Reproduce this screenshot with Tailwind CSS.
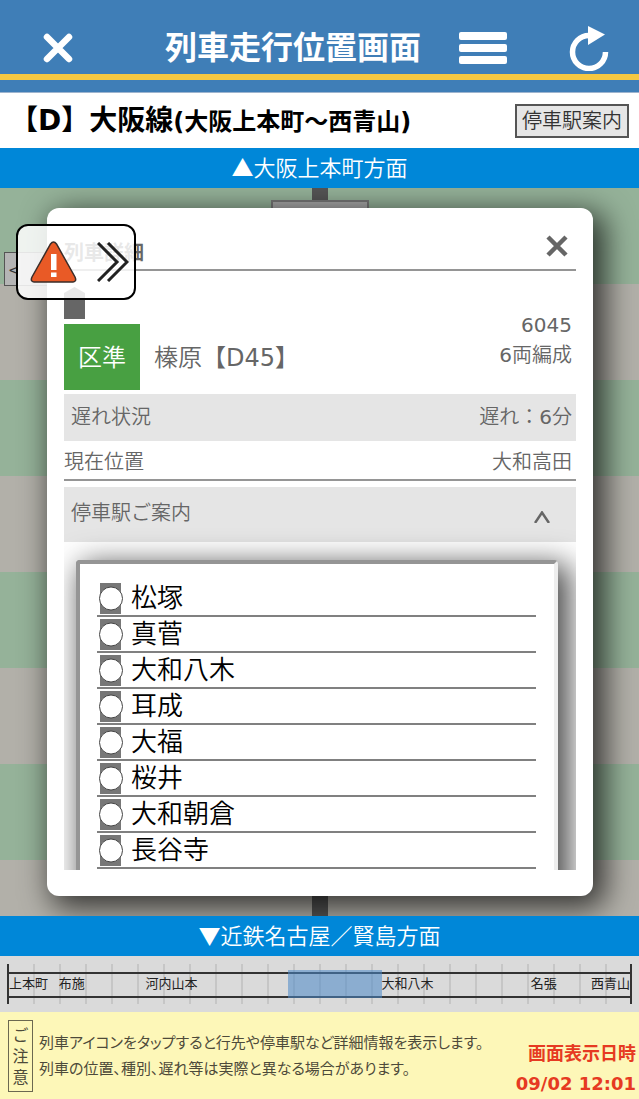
<!DOCTYPE html>
<html lang="ja">
<head>
    <meta charset="UTF-8">
    <meta name="viewport" content="width=device-width, initial-scale=1">
    <title>列車走行位置画面</title>
    <script src="https://cdn.jsdelivr.net/npm/@tailwindcss/browser@4"></script>
</head>
<body class="min-h-screen flex flex-col bg-white text-[#666] font-['DejaVu_Sans','Noto_Sans_CJK_JP',sans-serif]">
    <!-- Header -->
    <header class="bg-[#3f7eb7] text-white pb-3 border-b border-[#9db4cf]">
        <div class="h-20 flex items-center border-b-6 border-[#f5c842] pt-[22px] pl-[43px] pr-[30px]">
            <button aria-label="閉じる">
                <svg class="size-[30px]" viewBox="0 0 30 30" fill="none" stroke="currentColor" stroke-width="6.500" stroke-linecap="round"><path d="M4 4L26 26M26 4L4 26"/></svg>
            </button>
            <h1 class="grow text-right text-[32px] leading-10 font-bold mr-[38px]">列車走行位置画面</h1>
            <button class="mr-[62px]" aria-label="メニュー">
                <svg class="w-12 h-8" viewBox="0 0 48 32" fill="currentColor"><rect width="48" height="8" rx="2"/><rect y="12" width="48" height="8" rx="2"/><rect y="24" width="48" height="8" rx="2"/></svg>
            </button>
            <button aria-label="更新">
                <svg class="w-10 h-[46px]" viewBox="0 0 40 46"><path d="M20 10.500A16.500 16.500 0 1 0 36.500 27" fill="none" stroke="currentColor" stroke-width="5.500"/><path d="M19 1L36 9.500L19 20Z" fill="currentColor"/></svg>
            </button>
        </div>
    </header>
    <div class="h-[55px] flex items-center justify-between pl-[10px] pr-[10px] text-black">
        <h2 class="text-[28px] leading-9 font-bold">【D】大阪線<span class="text-2xl">(大阪上本町〜西青山)</span></h2>
        <button class="h-[34px] border-2 border-[#555] bg-[#e6e6e6] px-[5px] text-xl leading-7 font-[350] text-[#333]">停車駅案内</button>
    </div>
    <div class="h-10 bg-[#0087d8] text-white text-center text-[22px] leading-9 font-[350] font-['Noto_Sans_CJK_JP',sans-serif]">▲大阪上本町方面</div>

    <!-- Line map, with the train detail dialog over it -->
    <main class="relative grow flex py-5 pl-[47px] pr-[46px] overflow-hidden bg-[repeating-linear-gradient(to_bottom,#95b299_0_96px,#b2b0a9_96px_192px)]">
        <div class="absolute inset-y-0 left-1/2 -translate-x-1/2 w-4 bg-[#555]"></div>
        <div class="absolute top-3 left-1/2 -translate-x-1/2 w-[98px] h-12 border-2 border-[#777] bg-[#aaa]"></div>
        <button class="absolute top-16 left-1 w-14 h-[34px] border border-[#555] bg-[#b5b5b5] text-left pl-1 text-[#333] font-['Noto_Sans_CJK_JP',sans-serif]">&lt;</button>

        <section role="dialog" aria-labelledby="detail" class="relative grow flex flex-col rounded-xl bg-white px-[17px] pb-[26px] shadow-[8px_8px_30px_4px_rgba(0,0,0,0.700)]">
            <div class="h-[63px] flex items-end justify-between border-b-2 border-[#959595] pb-1 pr-2">
                <h3 id="detail" class="text-xl leading-6 font-bold">列車詳細</h3>
                <button class="pb-2" aria-label="詳細を閉じる">
                    <svg class="size-[22px]" viewBox="0 0 22 22" fill="none" stroke="#666" stroke-width="4.500"><path d="M2 2L20 20M20 2L2 20"/></svg>
                </button>
            </div>
            <div class="h-[599px] overflow-hidden">
                <svg class="w-[21px] h-8 mt-4" viewBox="0 0 21 32" fill="#666"><path d="M0 6L10.500 0L21 6V32H0Z"/></svg>
                <div class="flex mt-[5px] mb-1">
                    <span class="w-[76px] h-[66px] bg-[#48a042] text-white text-2xl leading-[64px] text-center font-[350] font-['Noto_Sans_CJK_JP',sans-serif]">区準</span>
                    <p class="ml-[14px] text-2xl leading-[68px] h-[66px]"><span class="font-[350]">榛原</span>【D45】</p>
                    <p class="ml-auto mr-1 -mt-[14px] h-[66px] text-xl leading-[30px] text-right">6045<br>6<span class="font-[350]">両編成</span></p>
                </div>
                <dl class="text-xl">
                    <div class="h-[47px] flex justify-between items-center bg-[#e5e5e5] pl-[7px] pr-1 pb-[2px]"><dt class="font-[350]">遅れ状況</dt><dd><span class="font-[350]">遅れ：</span>6<span class="font-[350]">分</span></dd></div>
                    <div class="h-10 flex justify-between items-center border-b-2 border-[#959595] pt-[3px] pr-1 font-[350]"><dt>現在位置</dt><dd>大和高田</dd></div>
                </dl>
                <button class="mt-[6px] h-[55px] w-full flex justify-between items-center bg-[#e5e5e5] pl-[7px] pr-[26px] pb-1 text-xl font-[350]">
                    停車駅ご案内
                    <svg class="w-4 h-3 mt-2" viewBox="0 0 16 12" fill="none" stroke="#666" stroke-width="2.500"><path d="M1 12L8 1.500L15 12"/></svg>
                </button>
                <ul class="mt-[18px] ml-3 mr-[18px] h-[400px] rounded border-4 border-t-[#959595] border-l-[#959595] border-r-[#eee] border-b-[#eee] bg-white pt-[17px] pl-[17px] pr-[18px] text-[26px] leading-9 font-[350] text-black shadow-[8px_8px_30px_4px_rgba(0,0,0,0.700)]">
                    <li class="h-9 flex items-center gap-2 border-b-2 border-[#808080]"><svg class="w-[26px] h-8" viewBox="0 0 26 32"><path id="stop" d="M3 1H24V32H3Z" fill="#777"/><circle id="dot" cx="14" cy="16.500" r="11.500" fill="#fff" stroke="#444"/></svg>松塚</li>
                    <li class="h-9 flex items-center gap-2 border-b-2 border-[#808080]"><svg class="w-[26px] h-8" viewBox="0 0 26 32"><use href="#stop"/><use href="#dot"/></svg>真菅</li>
                    <li class="h-9 flex items-center gap-2 border-b-2 border-[#808080]"><svg class="w-[26px] h-8" viewBox="0 0 26 32"><use href="#stop"/><use href="#dot"/></svg>大和八木</li>
                    <li class="h-9 flex items-center gap-2 border-b-2 border-[#808080]"><svg class="w-[26px] h-8" viewBox="0 0 26 32"><use href="#stop"/><use href="#dot"/></svg>耳成</li>
                    <li class="h-9 flex items-center gap-2 border-b-2 border-[#808080]"><svg class="w-[26px] h-8" viewBox="0 0 26 32"><use href="#stop"/><use href="#dot"/></svg>大福</li>
                    <li class="h-9 flex items-center gap-2 border-b-2 border-[#808080]"><svg class="w-[26px] h-8" viewBox="0 0 26 32"><use href="#stop"/><use href="#dot"/></svg>桜井</li>
                    <li class="h-9 flex items-center gap-2 border-b-2 border-[#808080]"><svg class="w-[26px] h-8" viewBox="0 0 26 32"><use href="#stop"/><use href="#dot"/></svg>大和朝倉</li>
                    <li class="h-9 flex items-center gap-2 border-b-2 border-[#808080]"><svg class="w-[26px] h-8" viewBox="0 0 26 32"><use href="#stop"/><use href="#dot"/></svg>長谷寺</li>
                </ul>
            </div>
        </section>

        <!-- Floating alert tab -->
        <button class="absolute top-9 left-4 w-[120px] h-[76px] flex items-center justify-between rounded-xl border-2 border-black bg-white/85 pl-3 pr-[5px]" aria-label="運行情報">
            <svg class="w-[47px] h-[42px]" viewBox="0 0 47 42"><path d="M20.500 3Q23.500-1 26.500 3L45 36Q47 40.500 43 41H4Q0 40.500 2 36Z" fill="#e95a26" stroke="#3a2c28" stroke-width="1.500"/><path d="M21 13H26.500V29H21ZM21 31.500H26.500V36H21Z" fill="#fff"/></svg>
            <svg class="w-8 h-10" viewBox="0 0 32 40" fill="none" stroke="#222" stroke-width="3"><path d="M1 1L20 20L1 39M11 1L30 20L11 39"/></svg>
        </button>
    </main>

    <div class="h-10 bg-[#0087d8] text-white text-center text-[22px] leading-9 font-[350] font-['Noto_Sans_CJK_JP',sans-serif]">▼近鉄名古屋／賢島方面</div>

    <!-- Line overview -->
    <nav class="h-14 bg-[#dadada] px-[7px] py-2">
        <div class="relative h-10 border-x-2 border-[#333] bg-[repeating-linear-gradient(to_right,transparent_0_24px,#c6c6c6_24px_26px)] text-[13px] leading-6 text-[#222]">
            <div class="absolute inset-x-0 top-2 h-[26px] border-y-2 border-[#333]"></div>
            <div class="absolute left-[45%] top-[6px] w-[15%] h-7 bg-[#4b88c8]/55"></div>
            <span class="absolute left-0 top-2">上本町</span>
            <span class="absolute left-[8%] top-2">布施</span>
            <span class="absolute left-[22%] top-2">河内山本</span>
            <span class="absolute left-[60%] top-2">大和八木</span>
            <span class="absolute left-[84%] top-2">名張</span>
            <span class="absolute right-0 top-2">西青山</span>
        </div>
    </nav>

    <!-- Notes -->
    <footer class="h-[87px] flex items-center justify-between bg-[#fdf7b8] pl-2 pr-[3px] text-[#4d4a3a]">
        <span class="w-[25px] h-[72px] shrink-0 border border-[#6b6850] text-base leading-[21px] text-center py-1">ご注意</span>
        <p class="ml-[6px] grow text-[15px] leading-[26px] whitespace-nowrap [font-feature-settings:'palt']">列車アイコンをタップすると行先や停車駅など詳細情報を表示します。<br>列車の位置、種別、遅れ等は実際と異なる場合があります。</p>
        <p class="self-end text-lg leading-[30px] font-bold text-right text-[#e63a22] whitespace-nowrap">画面表示日時<br>09/02 12:01</p>
    </footer>
</body>
</html>
